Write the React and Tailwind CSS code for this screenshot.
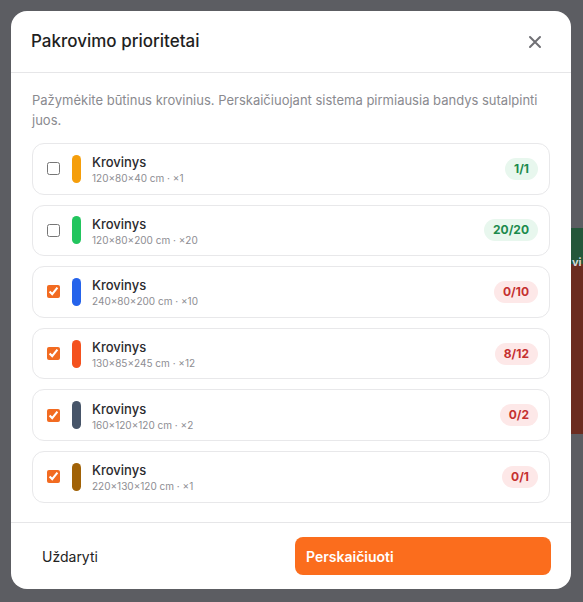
import React from "react";

const items = [
  { color: "#f59e0b", dims: "120×80×40 cm · ×1", badge: "1/1", ok: true, checked: false },
  { color: "#22c55e", dims: "120×80×200 cm · ×20", badge: "20/20", ok: true, checked: false },
  { color: "#2563eb", dims: "240×80×200 cm · ×10", badge: "0/10", ok: false, checked: true },
  { color: "#f4511e", dims: "130×85×245 cm · ×12", badge: "8/12", ok: false, checked: true },
  { color: "#475569", dims: "160×120×120 cm · ×2", badge: "0/2", ok: false, checked: true },
  { color: "#a16207", dims: "220×130×120 cm · ×1", badge: "0/1", ok: false, checked: true },
];

function Row({ item }) {
  return (
    <div className="flex h-[51.6px] items-center rounded-xl border border-[#e8e8ea] pl-[14px] pr-[11px]">
      <input
        type="checkbox"
        defaultChecked={item.checked}
        className="m-0 h-[13px] w-[13px] accent-[#f26b21]"
      />
      <span
        className="ml-[12px] h-[28px] w-[9px] rounded-full"
        style={{ backgroundColor: item.color }}
      />
      <div className="ml-[11px] flex min-w-0 flex-1 flex-col pt-[2px]">
        <span className="text-[13px] font-medium leading-[18px] text-[#2a2a2e]">Krovinys</span>
        <span className="text-[10px] leading-[15px] text-[#8d8d92]">{item.dims}</span>
      </div>
      <span
        className={
          item.ok
            ? "rounded-full bg-[#e8f7ee] px-[9px] py-[3px] text-[12px] font-bold leading-[16px] text-[#1b8a4c]"
            : "rounded-full bg-[#fde8e8] px-[9px] py-[3px] text-[12px] font-bold leading-[16px] text-[#c53030]"
        }
      >
        {item.badge}
      </span>
    </div>
  );
}

export default function App() {
  return (
    <div
      className="relative h-[602px] w-[583px] overflow-hidden bg-[#5c5d62] p-[11px]"
      style={{ fontFamily: "Inter, 'Noto Sans', sans-serif" }}
    >
      {/* background scene hints */}
      <div className="absolute left-[571px] top-[228px] h-[36px] w-[20px] bg-[#24573a]" />
      <div className="absolute left-[571px] top-[264px] h-[170px] w-[20px] bg-[#6b2c20]" />
      <div className="absolute left-[572px] top-[254px] text-[11px] font-bold text-[#d6d6d6]">vi</div>

      <div className="relative flex h-[578px] w-[560px] flex-col rounded-2xl bg-white">
        <div className="flex h-[62px] shrink-0 items-center justify-between border-b border-[#e6e6e8] pl-[20px] pr-[29px]">
          <h2 className="text-[17px] font-medium text-[#1f1f1f]">Pakrovimo prioritetai</h2>
          <svg width="14" height="14" viewBox="0 0 14 14" fill="none" stroke="#707075" strokeWidth="2" strokeLinecap="round">
            <path d="M2 2L12 12M12 2L2 12" />
          </svg>
        </div>
        <div className="flex flex-1 flex-col px-[21px] pt-[17px]">
          <p className="text-[13px] leading-[20px] text-[#8a8a8f]">
            Pažymėkite būtinus krovinius. Perskaičiuojant sistema pirmiausia bandys sutalpinti juos.
          </p>
          <div className="mt-[13px] flex flex-col gap-[10px]">
            {items.map((it, i) => (
              <Row key={i} item={it} />
            ))}
          </div>
        </div>
        <div className="flex h-[67px] shrink-0 items-center justify-between border-t border-[#e6e6e8] pl-[20px] pr-[20px]">
          <button className="rounded-lg px-[11px] py-[9px] text-[14px] text-[#222]">Uždaryti</button>
          <button className="h-[38px] w-[256px] rounded-lg bg-[#fb6d1d] px-[11px] text-left text-[14px] font-semibold text-white">
            Perskaičiuoti
          </button>
        </div>
      </div>
    </div>
  );
}
